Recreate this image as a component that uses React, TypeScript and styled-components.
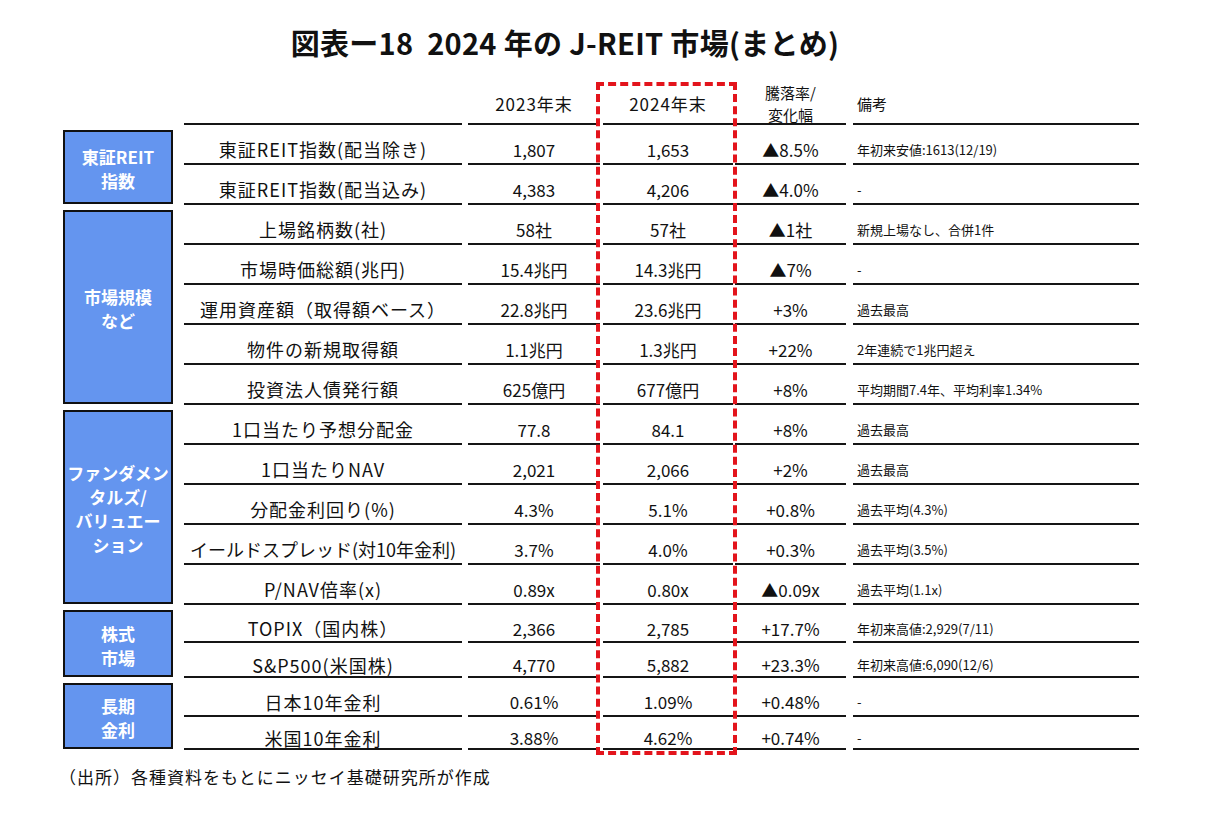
import React from "react";
import styled, { createGlobalStyle } from "styled-components";

const Global = createGlobalStyle`
  html, body { margin: 0; padding: 0; background: #ffffff; }
  body { font-family: "Noto Sans CJK JP", "Noto Sans", sans-serif; color: #111; }
`;

const Page = styled.div`
  width: 1205px;
  height: 821px;
  position: relative;
  padding-top: 24px;
  box-sizing: border-box;
`;

const Title = styled.h1`
  margin: 0;
  width: 1130px;
  text-align: center;
  font-size: 29px;
  line-height: 36px;
  font-weight: 700;
  letter-spacing: 0.3px;
  white-space: pre;
`;

const Table = styled.div`
  position: relative;
  margin-left: 63px;
  margin-top: 20px;
  width: 1076px;
`;

const HeaderRow = styled.div`
  display: flex;
  height: 45px;
  margin-left: 121px;
`;

const Cell = styled.div<{ $w: number; $ml?: number; $align?: "left" | "center" }>`
  width: ${(p) => p.$w}px;
  margin-left: ${(p) => p.$ml ?? 0}px;
  box-sizing: border-box;
  border-bottom: 2px solid #151515;
  display: flex;
  align-items: center;
  justify-content: ${(p) => (p.$align === "left" ? "flex-start" : "center")};
  padding-left: ${(p) => (p.$align === "left" ? "4px" : "0")};
  text-align: ${(p) => p.$align ?? "center"};
`;

const HeadText = styled.span<{ $size?: number; $ls?: number }>`
  font-size: ${(p) => p.$size ?? 17}px;
  letter-spacing: ${(p) => p.$ls ?? 0}px;
  line-height: 22px;
  padding-top: 4px;
`;

const Group = styled.div`
  display: flex;
  align-items: stretch;
`;

const Category = styled.div`
  width: 110px;
  margin-top: 5px;
  margin-bottom: 1px;
  box-sizing: border-box;
  background: #6495ef;
  border: 2px solid #111;
  display: flex;
  align-items: center;
  justify-content: center;
  text-align: center;
  color: #ffffff;
  font-size: 17px;
  line-height: 24px;
  font-weight: 700;
  padding-top: 4px;
`;

const Rows = styled.div`
  margin-left: 11px;
  display: flex;
  flex-direction: column;
`;

const Row = styled.div<{ $h: number }>`
  display: flex;
  height: ${(p) => p.$h}px;
  & > div {
    padding-top: 10px;
  }
`;

const Label = styled.span<{ $tight?: boolean }>`
  font-size: 18px;
  letter-spacing: ${(p) => (p.$tight ? 0 : 1)}px;
  white-space: nowrap;
`;

const Value = styled.span`
  font-size: 17px;
  white-space: nowrap;
`;

const Note = styled.span`
  font-size: 13px;
  white-space: nowrap;
`;

const Highlight = styled.div`
  position: absolute;
  left: 533px;
  top: 2px;
  width: 141px;
  height: 673px;
  box-sizing: border-box;
  border: 4px dashed #e3141c;
  pointer-events: none;
`;

const Footer = styled.div`
  margin-left: 59px;
  margin-top: 16px;
  font-size: 17px;
  letter-spacing: 1px;
  line-height: 22px;
`;

type RowData = {
  label: string;
  a: string;
  b: string;
  c: string;
  note: string;
  h: number;
  tight?: boolean;
};

type GroupData = { cat: React.ReactNode; rows: RowData[] };

const groups: GroupData[] = [
  {
    cat: (
      <>
        東証REIT
        <br />
        指数
      </>
    ),
    rows: [
      { label: "東証REIT指数(配当除き)", a: "1,807", b: "1,653", c: "▲8.5%", note: "年初来安値:1613(12/19)", h: 40 },
      { label: "東証REIT指数(配当込み)", a: "4,383", b: "4,206", c: "▲4.0%", note: "-", h: 40 },
    ],
  },
  {
    cat: (
      <>
        市場規模
        <br />
        など
      </>
    ),
    rows: [
      { label: "上場銘柄数(社)", a: "58社", b: "57社", c: "▲1社", note: "新規上場なし、合併1件", h: 40 },
      { label: "市場時価総額(兆円)", a: "15.4兆円", b: "14.3兆円", c: "▲7%", note: "-", h: 40 },
      { label: "運用資産額（取得額ベース）", a: "22.8兆円", b: "23.6兆円", c: "+3%", note: "過去最高", h: 40 },
      { label: "物件の新規取得額", a: "1.1兆円", b: "1.3兆円", c: "+22%", note: "2年連続で1兆円超え", h: 40 },
      { label: "投資法人債発行額", a: "625億円", b: "677億円", c: "+8%", note: "平均期間7.4年、平均利率1.34%", h: 40 },
    ],
  },
  {
    cat: (
      <>
        ファンダメン
        <br />
        タルズ/
        <br />
        バリュエー
        <br />
        ション
      </>
    ),
    rows: [
      { label: "1口当たり予想分配金", a: "77.8", b: "84.1", c: "+8%", note: "過去最高", h: 40 },
      { label: "1口当たりNAV", a: "2,021", b: "2,066", c: "+2%", note: "過去最高", h: 40 },
      { label: "分配金利回り(%)", a: "4.3%", b: "5.1%", c: "+0.8%", note: "過去平均(4.3%)", h: 40 },
      { label: "イールドスプレッド(対10年金利)", a: "3.7%", b: "4.0%", c: "+0.3%", note: "過去平均(3.5%)", h: 40, tight: true },
      { label: "P/NAV倍率(x)", a: "0.89x", b: "0.80x", c: "▲0.09x", note: "過去平均(1.1x)", h: 40 },
    ],
  },
  {
    cat: (
      <>
        株式
        <br />
        市場
      </>
    ),
    rows: [
      { label: "TOPIX（国内株）", a: "2,366", b: "2,785", c: "+17.7%", note: "年初来高値:2,929(7/11)", h: 38 },
      { label: "S&P500(米国株)", a: "4,770", b: "5,882", c: "+23.3%", note: "年初来高値:6,090(12/6)", h: 35 },
    ],
  },
  {
    cat: (
      <>
        長期
        <br />
        金利
      </>
    ),
    rows: [
      { label: "日本10年金利", a: "0.61%", b: "1.09%", c: "+0.48%", note: "-", h: 39 },
      { label: "米国10年金利", a: "3.88%", b: "4.62%", c: "+0.74%", note: "-", h: 33 },
    ],
  },
];

export default function App() {
  return (
    <Page>
      <Global />
      <Title>{"図表ー18  2024 年の J-REIT 市場(まとめ)"}</Title>
      <Table>
        <HeaderRow>
          <Cell $w={278} />
          <Cell $w={132} $ml={6}>
            <HeadText $ls={1}>2023年末</HeadText>
          </Cell>
          <Cell $w={130} $ml={3}>
            <HeadText $ls={1}>2024年末</HeadText>
          </Cell>
          <Cell $w={111} $ml={2}>
            <HeadText $size={15}>
              騰落率/
              <br />
              変化幅
            </HeadText>
          </Cell>
          <Cell $w={286} $ml={7} $align="left">
            <HeadText $size={15}>備考</HeadText>
          </Cell>
        </HeaderRow>
        {groups.map((g, gi) => (
          <Group key={gi}>
            <Category>
              <div>{g.cat}</div>
            </Category>
            <Rows>
              {g.rows.map((r, ri) => (
                <Row key={ri} $h={r.h}>
                  <Cell $w={278}>
                    <Label $tight={r.tight}>{r.label}</Label>
                  </Cell>
                  <Cell $w={132} $ml={6}>
                    <Value>{r.a}</Value>
                  </Cell>
                  <Cell $w={130} $ml={3}>
                    <Value>{r.b}</Value>
                  </Cell>
                  <Cell $w={111} $ml={2}>
                    <Value>{r.c}</Value>
                  </Cell>
                  <Cell $w={286} $ml={7} $align="left">
                    <Note>{r.note}</Note>
                  </Cell>
                </Row>
              ))}
            </Rows>
          </Group>
        ))}
        <Highlight />
      </Table>
      <Footer>（出所）各種資料をもとにニッセイ基礎研究所が作成</Footer>
    </Page>
  );
}
